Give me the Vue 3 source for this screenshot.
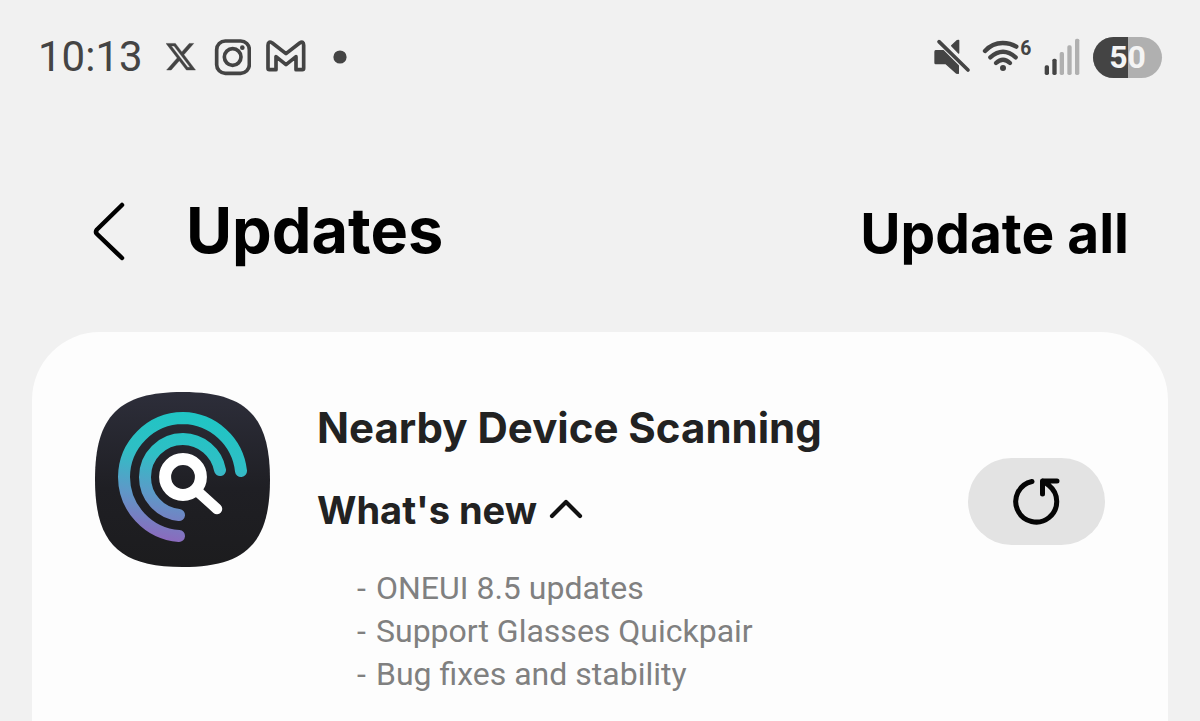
<script setup>
import { ref } from 'vue'

const expanded = ref(true)
const battery = 50
const bars = [
  { x: 371, top: 136, on: true },
  { x: 394, top: 116, on: true },
  { x: 416, top: 96, on: false },
  { x: 439, top: 76, on: false },
  { x: 462, top: 56, on: false },
]
const app = {
  name: 'Nearby Device Scanning',
  notes: ['ONEUI 8.5 updates', 'Support Glasses Quickpair', 'Bug fixes and stability'],
}
</script>

<template>
  <div class="screen">
    <div class="status">
      <time class="clock">10:13</time>
      <div class="notifications">
        <svg width="33" height="30" viewBox="1.2 1.2 24.2 22" role="img" aria-label="X">
          <path fill="#444" stroke="#444" stroke-width=".3" d="M18.244 2.25h3.308l-7.227 8.26 8.502 11.24H16.17l-5.214-6.817L4.99 21.75H1.68l7.73-8.835L1.254 2.25H8.08l4.713 6.231zm-1.161 17.52h1.833L7.084 4.126H5.117z" />
        </svg>
        <svg width="37" height="38" viewBox="582 54 111 114" role="img" aria-label="Instagram">
          <g fill="none" stroke="#444" stroke-width="11">
            <rect x="590" y="63" width="98" height="97" rx="26" />
            <circle cx="638" cy="111" r="25" />
          </g>
          <circle cx="667" cy="83" r="7" fill="#444" />
        </svg>
        <svg width="40" height="38" viewBox="737 54 120 114" role="img" aria-label="Gmail">
          <path fill="none" stroke="#444" stroke-width="11" stroke-linejoin="round" d="M743 145V76Q743 61 756 69L797 101L838 69Q850 61 850 76V145Q850 149 846 149H827V110L797 134L767 110V149H747Q743 149 743 145Z" />
        </svg>
        <svg width="38" height="38" viewBox="0 0 38 38" aria-hidden="true"><circle cx="19" cy="19" r="6.6" fill="#444" /></svg>
      </div>
      <div class="system">
        <svg width="37" height="38" viewBox="45 54 111 114" role="img" aria-label="Muted">
          <path fill="#444" stroke="#444" stroke-width="4" stroke-linejoin="round" d="M50 92H73L118 137V160L112 159L81 131H50Q48 131 48 128V95Q48 92 50 92ZM98 77L114 62L119 61V99Z" />
          <path stroke="#444" stroke-width="11" stroke-linecap="round" d="M60 65L147 150" />
        </svg>
        <svg width="51" height="38" viewBox="186 54 153 114" role="img" aria-label="Wi-Fi 6">
          <g fill="none" stroke="#444" stroke-width="13" stroke-linecap="round">
            <path d="M195 93Q217 69 248 69Q271 69 289 80" />
            <path d="M211 112Q249 79 287 112" />
            <path d="M228 129Q249 109 270 129" />
          </g>
          <circle cx="249" cy="144" r="9" fill="#444" />
          <text class="generation" x="301" y="105">6</text>
        </svg>
        <svg width="36" height="38" viewBox="369 54 108 114" role="img" aria-label="Signal">
          <rect v-for="b in bars" :key="b.x" :x="b.x" :y="b.top" width="13" :height="165 - b.top" rx="5" :fill="b.on ? '#444' : '#b0b0b0'" />
        </svg>
        <span class="battery"><span class="charge" :style="{ width: battery + '%' }"></span><span class="level">{{ battery }}</span></span>
      </div>
    </div>

    <header class="header">
      <button class="back" type="button" aria-label="Back">
        <svg width="40" height="72" viewBox="0 0 40 72"><path fill="none" stroke="#000" stroke-width="4.5" stroke-linecap="round" stroke-linejoin="round" d="M34 11L9 35.500Q7 38 9 40L34 64" /></svg>
      </button>
      <h1 class="title">Updates</h1>
      <button class="all" type="button">Update all</button>
    </header>

    <main class="card">
      <svg class="app-icon" width="175" height="175" viewBox="0 0 175 175" role="img" aria-label="Nearby Device Scanning icon">
        <defs>
          <linearGradient id="tile" x1="0" y1="0" x2="0" y2="1">
            <stop offset="0" stop-color="#2d2e3a" />
            <stop offset=".55" stop-color="#1f1f24" />
            <stop offset="1" stop-color="#1c1c1e" />
          </linearGradient>
          <linearGradient id="wave" gradientUnits="userSpaceOnUse" x1="90" y1="20" x2="68" y2="150">
            <stop offset="0" stop-color="#1fc5c4" />
            <stop offset=".35" stop-color="#2fbfc5" />
            <stop offset=".65" stop-color="#5c9ac8" />
            <stop offset="1" stop-color="#8d68bd" />
          </linearGradient>
        </defs>
        <path fill="url(#tile)" d="M87.500 0C151 0 175 24 175 87.500S151 175 87.500 175S0 151 0 87.500S24 0 87.500 0Z" />
        <g fill="none" stroke="url(#wave)" stroke-width="12" stroke-linecap="round">
          <path d="M146 79A59.500 59.500 0 0 0 88 26A59.500 59.500 0 0 0 29 85A59.500 59.500 0 0 0 84 144" />
          <path d="M125 78A38 38 0 0 0 88 47A38 38 0 0 0 50 85A38 38 0 0 0 84 123" />
        </g>
        <g fill="none" stroke="#fff" stroke-linecap="round">
          <circle cx="88" cy="85" r="17.900" stroke-width="12" />
          <path stroke-width="10.500" d="M101 98L122 117" />
        </g>
      </svg>

      <section class="details">
        <h2 class="name">{{ app.name }}</h2>
        <button class="toggle" type="button" :aria-expanded="expanded" @click="expanded = !expanded">
          What's new
          <svg width="34" height="24" viewBox="0 0 34 24" :class="{ closed: !expanded }"><path fill="none" stroke="#111" stroke-width="4.200" stroke-linecap="round" stroke-linejoin="round" d="M3 18L17 4L31 18" /></svg>
        </button>
        <ul v-if="expanded" class="notes">
          <li v-for="n in app.notes" :key="n"><span class="dash">-</span><span>{{ n }}</span></li>
        </ul>
      </section>

      <button class="refresh" type="button" aria-label="Update Nearby Device Scanning">
        <svg width="56" height="56" viewBox="0 0 56 56"><path fill="none" stroke="#050505" stroke-width="5" stroke-linecap="round" stroke-linejoin="round" d="M23 7.500A20.500 20.500 0 1 0 40 11.500L34 7M48 7H33.500V20" /></svg>
      </button>
    </main>
  </div>
</template>

<style>
body { background: #f1f1f1; }
</style>

<style scoped>
.screen {
  box-sizing: border-box;
  min-height: 100vh;
  display: flex;
  flex-direction: column;
  background: #f1f1f1;
  font-family: Inter, sans-serif;
  color: #000;
}
svg { display: block; flex: none; }
button {
  border: 0;
  padding: 0;
  background: none;
  font: inherit;
  color: inherit;
  cursor: pointer;
}
h1, h2, ul { margin: 0; padding: 0; }

.status {
  display: flex;
  align-items: center;
  height: 114px;
  padding: 0 38px;
  color: #444;
}
.clock { font: 400 42px/48px Roboto, sans-serif; }
.notifications {
  display: flex;
  align-items: center;
  gap: 15px;
  margin-left: 23px;
}
.system {
  display: flex;
  align-items: center;
  gap: 11px;
  margin-left: auto;
}
.generation { font: 700 58px Roboto, sans-serif; fill: #444; }
.battery {
  position: relative;
  width: 69px;
  height: 41px;
  margin-left: 2px;
  border-radius: 21px;
  overflow: hidden;
  background: #b0b0b0;
}
.charge { position: absolute; inset: 0 auto 0 0; background: #444; }
.level {
  position: relative;
  display: block;
  text-align: center;
  font: 700 32px/41px Roboto, sans-serif;
  color: #f4f4f4;
}

.header {
  display: flex;
  align-items: baseline;
  padding: 76px 71px 62px 88px;
}
.back { align-self: center; width: 98px; }
.title { font-size: 63px; line-height: 80px; font-weight: 700; }
.all { margin-left: auto; font-size: 55px; line-height: 72px; font-weight: 700; }

.card {
  flex: 1;
  display: flex;
  align-items: flex-start;
  margin: 0 32px;
  padding: 60px 63px 24px;
  border-radius: 68px 68px 0 0;
  background: #fdfdfd;
}
.details { flex: 1; min-width: 0; margin-left: 47px; padding-top: 8px; color: #222; }
.name { font-size: 42px; line-height: 56px; font-weight: 700; }
.toggle {
  display: flex;
  align-items: center;
  gap: 12px;
  margin-top: 28px;
  font-size: 38px;
  line-height: 52px;
  font-weight: 700;
}
.closed { transform: rotate(180deg); }
.notes {
  margin: 31px 0 0 40px;
  list-style: none;
  font: 400 32px/43px Roboto, sans-serif;
  color: #808080;
}
.notes li { display: flex; }
.dash { width: 19px; }
.refresh {
  display: grid;
  place-items: center;
  width: 137px;
  height: 87px;
  margin-top: 66px;
  border-radius: 44px;
  background: #e3e3e3;
}
</style>
